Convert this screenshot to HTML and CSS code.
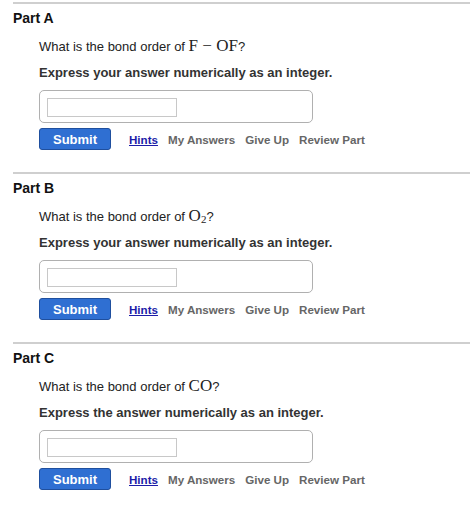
FILE: index.html
```html
<!DOCTYPE html>
<html lang="en">
<head>
    <meta charset="UTF-8">
    <meta name="viewport" content="width=device-width, initial-scale=1.0">
    <title>Bond Order</title>
    <link rel="stylesheet" href="styles.css">
</head>
<body>
    <main class="parts">
        <!-- Part A -->
        <section class="part">
            <h2>Part A</h2>
            <div class="part-body">
                <p class="question">What is the bond order of <span class="math">F &minus; OF</span>?</p>
                <p class="instruction">Express your answer numerically as an integer.</p>
                <div class="answer-box">
                    <input type="text" class="answer-input">
                </div>
                <div class="actions">
                    <button class="btn-submit">Submit</button>
                    <a href="#" class="link link-hints">Hints</a>
                    <a href="#" class="link">My Answers</a>
                    <a href="#" class="link">Give Up</a>
                    <a href="#" class="link">Review Part</a>
                </div>
            </div>
        </section>

        <!-- Part B -->
        <section class="part">
            <h2>Part B</h2>
            <div class="part-body">
                <p class="question">What is the bond order of <span class="math">O<sub>2</sub></span>?</p>
                <p class="instruction">Express your answer numerically as an integer.</p>
                <div class="answer-box">
                    <input type="text" class="answer-input">
                </div>
                <div class="actions">
                    <button class="btn-submit">Submit</button>
                    <a href="#" class="link link-hints">Hints</a>
                    <a href="#" class="link">My Answers</a>
                    <a href="#" class="link">Give Up</a>
                    <a href="#" class="link">Review Part</a>
                </div>
            </div>
        </section>

        <!-- Part C -->
        <section class="part">
            <h2>Part C</h2>
            <div class="part-body">
                <p class="question">What is the bond order of <span class="math">CO</span>?</p>
                <p class="instruction">Express the answer numerically as an integer.</p>
                <div class="answer-box">
                    <input type="text" class="answer-input">
                </div>
                <div class="actions">
                    <button class="btn-submit">Submit</button>
                    <a href="#" class="link link-hints">Hints</a>
                    <a href="#" class="link">My Answers</a>
                    <a href="#" class="link">Give Up</a>
                    <a href="#" class="link">Review Part</a>
                </div>
            </div>
        </section>
    </main>
</body>
</html>
```

FILE: styles.css
```css
body {
    margin: 0;
    padding: 2px 0 0 13px;
    font-family: "Liberation Sans", Arial, sans-serif;
    color: #222;
    background-color: white;
}
.part {
    border-top: 2px solid #cfcfcf;
    padding: 6px 0 22px 0;
}
.part h2 {
    margin: 0;
    font-size: 14px;
    line-height: 16px;
    font-weight: bold;
    color: #111;
}
.part-body {
    padding-left: 26px;
}
.question {
    margin: 12px 0 0 0;
    font-size: 13px;
    line-height: 15px;
    color: #222;
}
.math {
    font-family: "Liberation Serif", "Times New Roman", serif;
    font-size: 17px;
    line-height: 15px;
}
.math sub {
    font-size: 11px;
    line-height: 0;
    vertical-align: -2px;
}
.instruction {
    margin: 11px 0 0 0;
    font-size: 13px;
    line-height: 15px;
    font-weight: bold;
    color: #333;
}
.answer-box {
    margin-top: 10px;
    width: 258px;
    padding: 7px 7px 5px 7px;
    border: 1px solid #b0b0b0;
    border-radius: 5px;
}
.answer-input {
    display: block;
    box-sizing: border-box;
    width: 130px;
    height: 19px;
    margin: 0;
    padding: 0 4px;
    border: 1px solid #c8c8c8;
    background-color: white;
}
.actions {
    margin-top: 5px;
    display: flex;
    align-items: center;
    gap: 10px;
}
.btn-submit {
    box-sizing: border-box;
    width: 72px;
    height: 22px;
    margin-right: 8px;
    padding: 0;
    font-family: "Liberation Sans", Arial, sans-serif;
    font-size: 13px;
    font-weight: bold;
    color: white;
    background-color: #2f6fd2;
    border: 1px solid #1f4f9e;
    border-radius: 3px;
}
.link {
    font-size: 11.6px;
    font-weight: bold;
    color: #666;
    text-decoration: none;
}
.link-hints {
    color: #1c1ca8;
    text-decoration: underline;
}
```
